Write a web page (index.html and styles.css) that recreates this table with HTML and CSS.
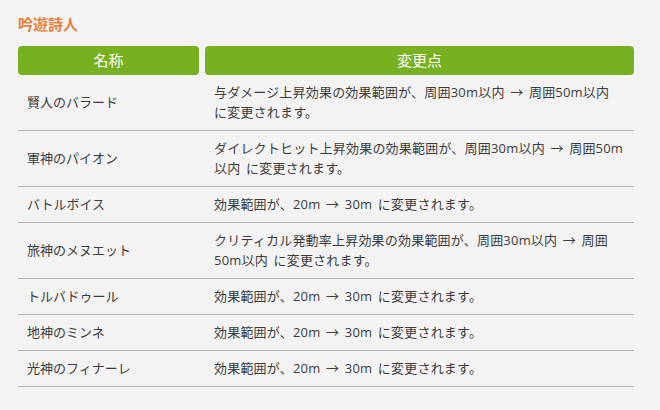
FILE: index.html
```html
<!DOCTYPE html>
<html lang="ja">
<head>
<meta charset="utf-8">
<link rel="stylesheet" href="styles.css">
</head>
<body>
<div class="page">
  <h2 class="title">吟遊詩人</h2>
  <div class="table">
    <div class="head">
      <div class="hcell name">名称</div>
      <div class="hcell change">変更点</div>
    </div>
    <div class="row"><div class="cell">賢人のバラード</div><div class="cell desc">与ダメージ上昇効果の効果範囲が、周囲30m以内 → 周囲50m以内<br>に変更されます。</div></div>
    <div class="row"><div class="cell">軍神のパイオン</div><div class="cell desc">ダイレクトヒット上昇効果の効果範囲が、周囲30m以内 → 周囲50m<br>以内 に変更されます。</div></div>
    <div class="row"><div class="cell">バトルボイス</div><div class="cell desc">効果範囲が、20m → 30m に変更されます。</div></div>
    <div class="row"><div class="cell">旅神のメヌエット</div><div class="cell desc">クリティカル発動率上昇効果の効果範囲が、周囲30m以内 → 周囲<br>50m以内 に変更されます。</div></div>
    <div class="row"><div class="cell">トルバドゥール</div><div class="cell desc">効果範囲が、20m → 30m に変更されます。</div></div>
    <div class="row"><div class="cell">地神のミンネ</div><div class="cell desc">効果範囲が、20m → 30m に変更されます。</div></div>
    <div class="row"><div class="cell">光神のフィナーレ</div><div class="cell desc">効果範囲が、20m → 30m に変更されます。</div></div>
  </div>
</div>
</body>
</html>
```

FILE: styles.css
```css
html, body {
  margin: 0;
  padding: 0;
  background: #f3f3f3;
}
body {
  font-family: "Open Sans", "Noto Sans CJK JP", sans-serif;
  color: #3c3c3c;
}
.page {
  padding: 14px 18px 0 18px;
  width: 616px;
}
.title {
  margin: 0 0 12px 0;
  font-family: "Noto Sans CJK JP", sans-serif;
  font-size: 15px;
  line-height: 20px;
  font-weight: bold;
  color: #e3813e;
}
.table {
  width: 616px;
}
.head {
  display: flex;
  gap: 6px;
}
.hcell {
  height: 29px;
  line-height: 29px;
  background: #77b122;
  color: #ffffff;
  border-radius: 4px;
  text-align: center;
  font-size: 15px;
}
.hcell.name {
  width: 181px;
}
.hcell.change {
  flex: 1;
}
.row {
  display: grid;
  grid-template-columns: 187px 1fr;
  border-bottom: 1px solid #b6b6b6;
  align-items: center;
}
.cell {
  padding: 7px 9px 8px 9px;
  font-size: 13px;
  line-height: 20px;
  white-space: nowrap;
}
.desc {
  letter-spacing: 0.2px;
  word-spacing: 2px;
}
```
